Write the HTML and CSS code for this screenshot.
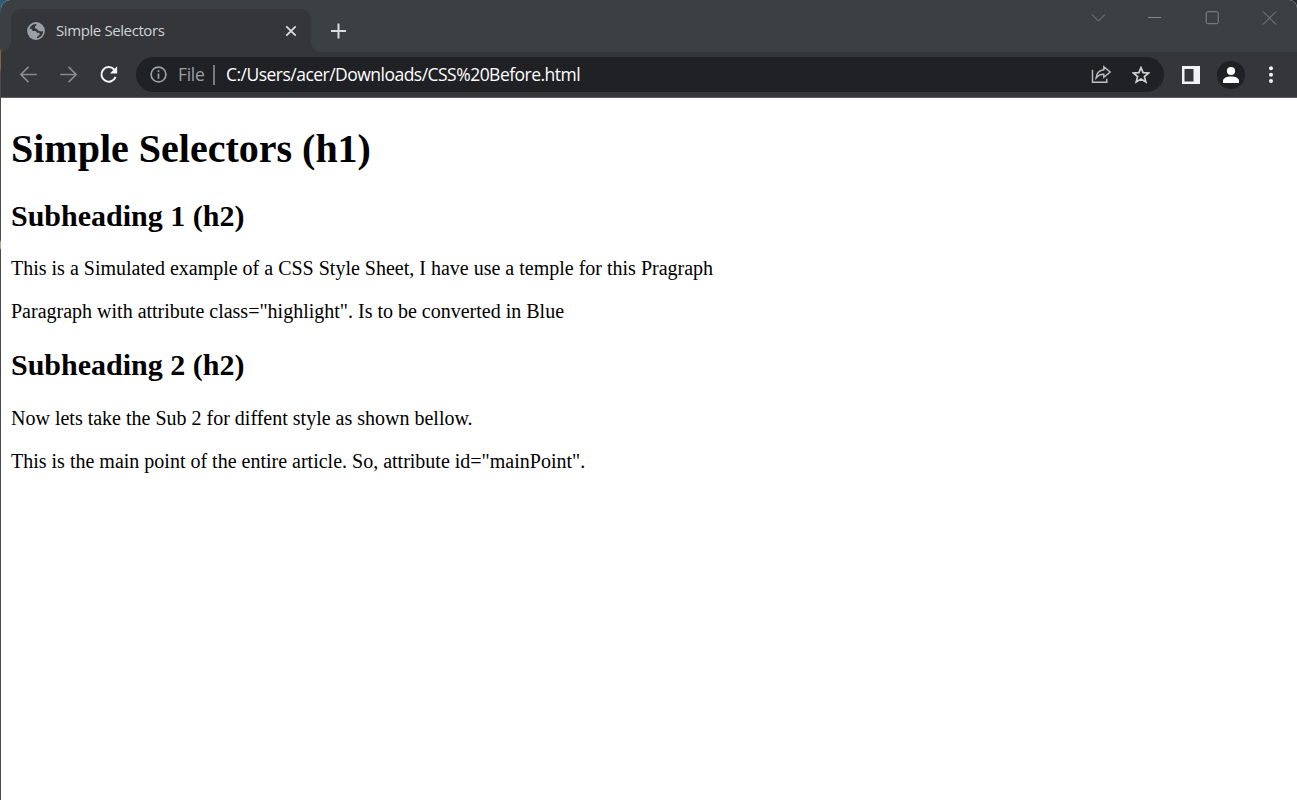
FILE: index.html
```html
<!DOCTYPE html>
<html lang="en">
<head>
<meta charset="utf-8">
<title>Simple Selectors</title>
<link rel="stylesheet" href="styles.css">
</head>
<body>
<div class="window">
  <header class="titlebar">
    <div class="tab">
      <svg class="globe" width="18" height="18" viewBox="0 0 18 18"><circle cx="9" cy="9" r="8.9" fill="#9aa0a6"/><path d="M8.4 1.8C7.9 3.8 6.2 4.4 5.2 5.6C5.1 7.1 6.8 7.2 7.6 7.1C8.8 7.2 8.3 8.6 9.3 9H12.1C13.3 9.3 12.6 11 14 11.2H15.6C14.7 14.1 12 16.1 8.8 16.1C8.1 15.4 8.8 14.5 9.6 13.9C10.5 13.1 10.3 12 9.2 11.6C7.3 11.4 7.2 9 5.1 8.8H1.9C1.8 5.2 4.8 2 8.4 1.8Z" fill="#35363a" transform="rotate(180 9 9)"/></svg>
      <span class="tab-title">Simple Selectors</span>
      <svg class="tab-close" width="12" height="12" viewBox="0 0 12 12"><path d="M1.3 1.3L10.7 10.7M10.7 1.3L1.3 10.7" stroke="#dadce0" stroke-width="1.8"/></svg>
    </div>
    <svg class="new-tab" width="16" height="16" viewBox="0 0 16 16"><path d="M8.5 .5V15.5M1 8H16" stroke="#dadce0" stroke-width="2"/></svg>
    <div class="controls">
      <svg width="15" height="15" viewBox="0 0 15 15"><path d="M1 4.5L7.5 11L14 4.5"/></svg>
      <svg width="15" height="15" viewBox="0 0 15 15"><path d="M0 7.5H13"/></svg>
      <svg width="15" height="15" viewBox="0 0 15 15"><rect x="1.2" y="1.7" width="12" height="12" rx="1.5"/></svg>
      <svg width="15" height="15" viewBox="0 0 15 15"><path d="M1 1.5L14 14.5M14 1.5L1 14.5"/></svg>
    </div>
  </header>
  <nav class="toolbar">
    <div class="nav-icons">
      <svg width="20" height="20" viewBox="0 0 20 20" stroke="#87898c"><path d="M17.8 9.5H2.5M9.5 1.9L1.9 9.5L9.5 17.1"/></svg>
      <svg width="20" height="20" viewBox="0 0 20 20" stroke="#87898c"><path d="M1.2 9.5H16.5M9.5 1.9L17.1 9.5L9.5 17.1"/></svg>
      <svg width="20" height="20" viewBox="0 0 20 20" stroke="#f1f3f4"><path d="M16.6 11.9A7.3 7.3 0 1 1 15.2 4.5" stroke-width="2"/><path d="M18.1 1.3V8.5H10.9Z" fill="#f1f3f4" stroke="none"/></svg>
    </div>
    <div class="omnibox">
      <svg width="17" height="17" viewBox="0 0 17 17"><circle cx="8.5" cy="8.5" r="7.4" fill="none" stroke="#9aa0a6" stroke-width="1.7"/><path d="M8.5 7.5V12.7M8.5 4.2V6" stroke="#9aa0a6" stroke-width="1.7"/></svg>
      <span class="scheme">File</span>
      <span class="divider"></span>
      <span class="address">C:/Users/acer/Downloads/CSS%20Before.html</span>
      <svg class="share" width="20" height="19" viewBox="0 0 20 19" fill="none" stroke="#bdc1c6" stroke-width="1.4"><path d="M1.5 4.7V17.3H15.8V13.8"/><path d="M12.8 1.7L19.2 7L12.8 12.2V9.3C9 9.2 7.1 10.4 5.1 13C5.5 8.7 8 5.4 12.8 4.8Z"/></svg>
      <svg class="star" width="18" height="18" viewBox="0 0 18 18" fill="none" stroke="#d0d0d0" stroke-width="1.7"><path d="M9 1.6L11.1 6.6L16.6 7L12.4 10.6L13.8 15.9L9 13L4.2 15.9L5.6 10.6L1.4 7L6.9 6.6Z"/></svg>
    </div>
    <svg class="panel" width="18" height="18" viewBox="0 0 18 18"><path d="M0 0H18V18H0ZM2.5 3V15.5H11.5V3Z" fill="#f1f3f4" fill-rule="evenodd"/></svg>
    <span class="avatar"><svg width="18" height="18" viewBox="0 0 18 18" fill="#fff"><circle cx="9" cy="5" r="4.1"/><path d="M1 17V14.6C1 11.9 5 10.4 9 10.4S17 11.9 17 14.6V17Z"/></svg></span>
    <svg class="menu" width="6" height="18" viewBox="0 0 6 18" fill="#f1f3f4"><circle cx="3" cy="2.3" r="2"/><circle cx="3" cy="8.7" r="2"/><circle cx="3" cy="15" r="2"/></svg>
  </nav>
  <main class="page">
    <h1>Simple Selectors (h1)</h1>
    <h2>Subheading 1 (h2)</h2>
    <p>This is a Simulated example of a CSS Style Sheet, I have use a temple for this Pragraph</p>
    <p>Paragraph with attribute class="highlight". Is to be converted in Blue</p>
    <h2>Subheading 2 (h2)</h2>
    <p>Now lets take the Sub 2 for diffent style as shown bellow.</p>
    <p>This is the main point of the entire article. So, attribute id="mainPoint".</p>
  </main>
</div>
</body>
</html>
```
FILE: styles.css
```css
* { box-sizing: border-box; }
body { margin: 0; height: 800px; overflow: hidden; padding-left: 1px; background: linear-gradient(#2d5b7c 0 12px, #3c4043 12px 48px, #806447 52px 68px, #4b4c50 72px 240px, #aaa695 242px 248px, #48494c 250px) left / 8px 800px no-repeat #292b2d; }
svg { display: block; flex: none; }
.window { height: 800px; border-radius: 9px 8px 0 0; overflow: hidden; background: #fff; }
.titlebar { display: flex; height: 52px; padding: 9px 20px 0 10px; background: #3c4043; }
.tab { position: relative; display: flex; align-items: center; width: 300px; height: 43px; padding: 0 14px 0 16px; border-radius: 10px 10px 0 0; background: #35363a; }
.tab::before, .tab::after { content: ""; position: absolute; bottom: 0; width: 10px; height: 10px; }
.tab::before { left: -10px; background: radial-gradient(circle at 0 0, transparent 9.5px, #35363a 10px); }
.tab::after { right: -10px; background: radial-gradient(circle at 100% 0, transparent 9.5px, #35363a 10px); }
.tab-title { margin: 0 0 2px 11px; color: #d1d3d6; font: 15px/20px "Open Sans", sans-serif; letter-spacing: -.4px; white-space: nowrap; }
.tab-close { margin-left: auto; }
.new-tab { margin: 14px 0 0 19px; }
.controls { display: flex; gap: 42px; margin: 1px 0 0 auto; }
.controls svg { fill: none; stroke: #85888b; stroke-width: 1; }
.toolbar { display: flex; align-items: center; height: 46px; padding: 0 23px 0 18px; border-bottom: 1px solid #5d5e62; background: #35363a; }
.nav-icons { display: flex; gap: 20px; }
.nav-icons svg { fill: none; stroke-width: 1.7; }
.omnibox { display: flex; align-items: center; width: 1028px; height: 35px; margin-left: 17px; padding: 0 14px; border-radius: 18px; background: #202124; font: 17.5px/24px "Open Sans", sans-serif; white-space: nowrap; }
.scheme { margin: 0 0 1px 11px; width: 27px; color: #9aa0a6; letter-spacing: -.3px; }
.divider { width: 2px; height: 20px; margin: 0 11px 0 8px; background: #787b7e; }
.address { margin-bottom: 1px; color: #fff; letter-spacing: -.52px; }
.share { margin-left: auto; }
.star { margin-left: 21px; }
.panel { margin-left: 18px; }
.avatar { display: grid; place-items: center; width: 28px; height: 28px; margin-left: 17px; border-radius: 50%; background: #202124; }
.menu { margin-left: 23px; }
.page { padding: 0 10px; color: #000; font: 20px/23px "Liberation Serif", serif; }
h1 { margin: 28px 0 27px; font-size: 40px; line-height: 46px; }
h2 { margin: 25px 0; font-size: 30px; line-height: 34px; }
h2:first-of-type { margin-bottom: 24px; }
p { margin: 20px 0; }
```
